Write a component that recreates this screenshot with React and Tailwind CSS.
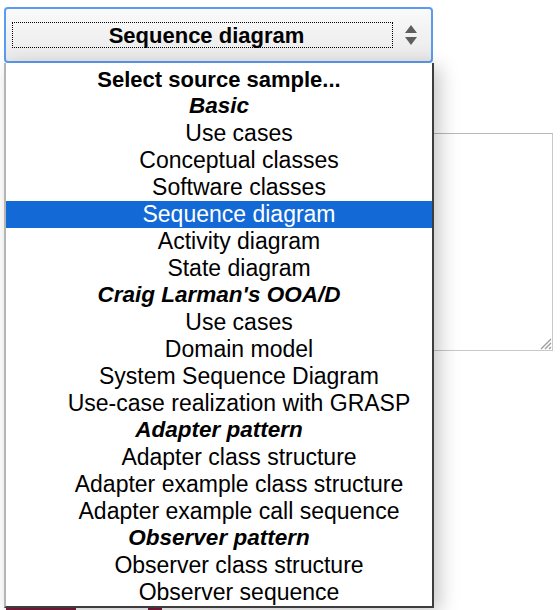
import React from 'react';

const rows = [
  { label: 'Select source sample...', kind: 'head' },
  { label: 'Basic', kind: 'group' },
  { label: 'Use cases' },
  { label: 'Conceptual classes' },
  { label: 'Software classes' },
  { label: 'Sequence diagram', selected: true },
  { label: 'Activity diagram' },
  { label: 'State diagram' },
  { label: "Craig Larman's OOA/D", kind: 'group' },
  { label: 'Use cases' },
  { label: 'Domain model' },
  { label: 'System Sequence Diagram' },
  { label: 'Use-case realization with GRASP' },
  { label: 'Adapter pattern', kind: 'group' },
  { label: 'Adapter class structure' },
  { label: 'Adapter example class structure' },
  { label: 'Adapter example call sequence' },
  { label: 'Observer pattern', kind: 'group' },
  { label: 'Observer class structure' },
  { label: 'Observer sequence' },
];

const Row = ({ label, kind, selected }) => {
  let cls = 'h-[27px] flex items-center justify-center whitespace-nowrap leading-none ';
  if (kind === 'head') cls += 'text-[22px] font-bold text-black';
  else if (kind === 'group') cls += 'text-[22.5px] font-bold italic text-black';
  else cls += 'text-[23px] pl-[40px] ' + (selected ? 'bg-[#1369d6] text-white' : 'text-black');
  return <div className={cls}>{label}</div>;
};

const App = () => {
  return (
    <div
      className="relative w-[560px] h-[610px] bg-white overflow-hidden"
      style={{ fontFamily: '"Liberation Sans", Arial, sans-serif' }}
    >
      {/* select button */}
      <div className="ml-[4px] mt-[7px] w-[429px] h-[56px] rounded-[4px] border-2 border-[#5a9bef] bg-gradient-to-b from-[#fafafa] to-[#e9e9e9] flex items-center pl-[6px] pr-[2px]">
        <div className="flex-1 h-[26px] border border-dotted border-black flex items-center justify-center pl-[8px]">
          <span className="text-[22px] font-bold text-black">Sequence diagram</span>
        </div>
        <div className="w-[36px] flex justify-center">
          <svg width="14" height="22" viewBox="0 0 14 22">
            <path d="M7 1 L13 9 L1 9 Z" fill="#5e5e5e" />
            <path d="M1 13 L13 13 L7 21 Z" fill="#5e5e5e" />
          </svg>
        </div>
      </div>

      {/* textarea behind */}
      <div className="ml-[200px] mt-[70px] w-[353px] h-[218px] border border-[#c8c8c8] border-t-[#b9b9b9] relative">
        <svg className="absolute right-0 bottom-0" width="16" height="16" viewBox="0 0 16 16">
          <path d="M15 5 L5 15 M15 9 L9 15 M15 13 L13 15" stroke="#9a9a9a" strokeWidth="1.3" />
        </svg>
      </div>

      {/* bits of the page below */}
      <div className="mt-[256px] ml-[6px] flex gap-[72px]">
        <div className="w-[70px] h-[3px] bg-[#7d1b3c]" />
        <div className="w-[14px] h-[3px] bg-[#7d1b3c]" />
      </div>

      {/* dropdown list */}
      <div className="absolute left-[4px] top-[63px] w-[430px] h-[545px] bg-white border-l-2 border-l-[#b5b5b5] border-r-2 border-r-[#3d3d3d] border-b-2 border-b-[#3d3d3d] pt-[3px] shadow-[6px_4px_18px_rgba(0,0,0,0.22)]">
        {rows.map((r, i) => (
          <Row key={i} {...r} />
        ))}
      </div>
    </div>
  );
};

export default App;
